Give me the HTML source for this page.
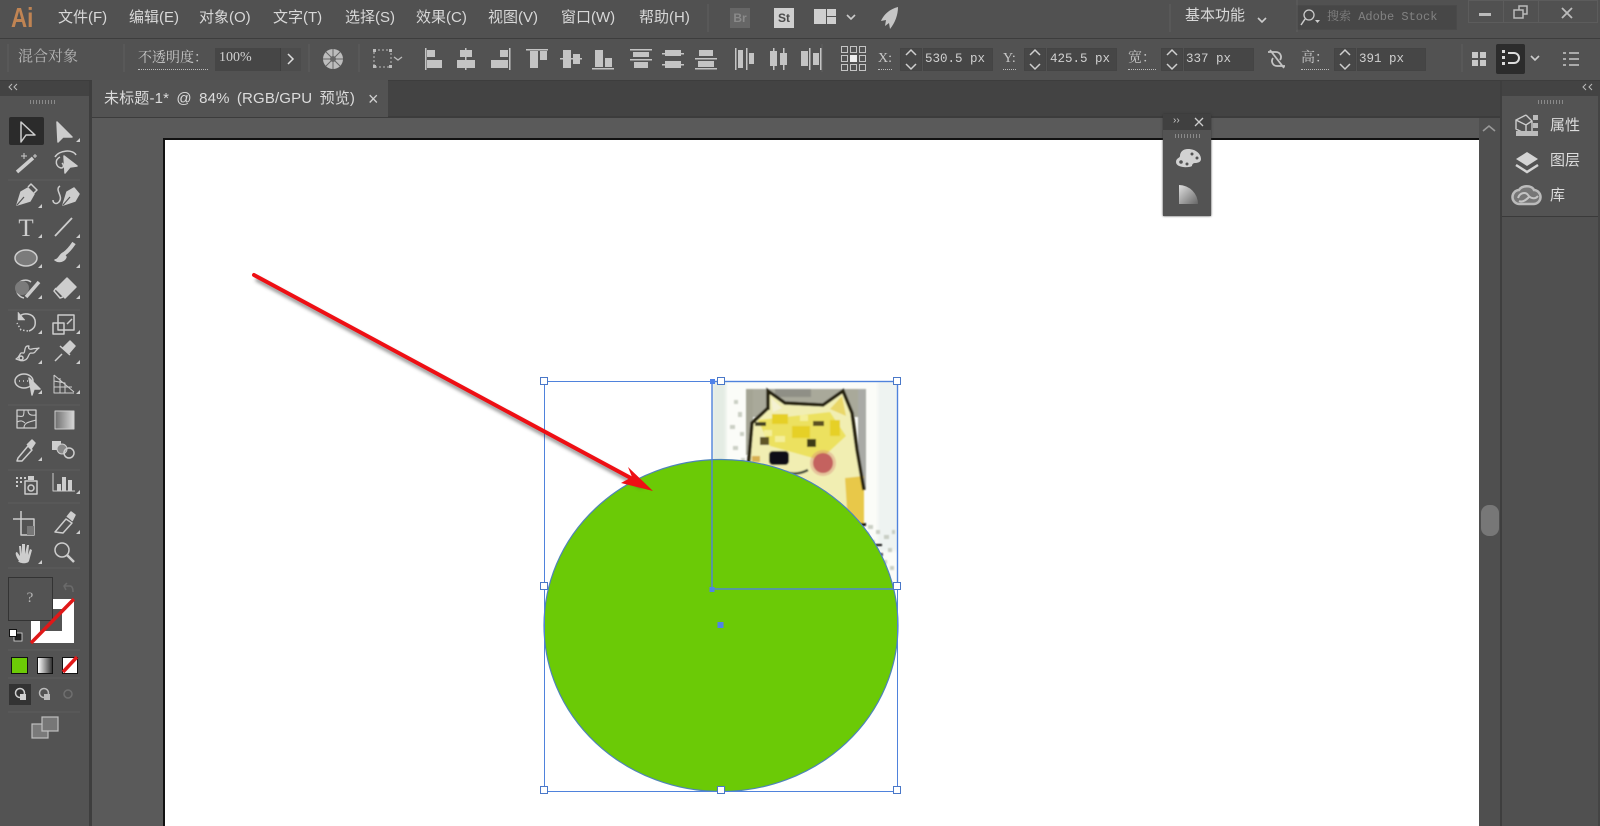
<!DOCTYPE html>
<html><head><meta charset="utf-8">
<style>
html,body{margin:0;padding:0;width:1600px;height:826px;overflow:hidden;background:#535353}
body{position:relative;font-family:"Liberation Sans","Noto Sans CJK SC",sans-serif;color:#d4d4d4}
#r{position:absolute;left:0;top:0;width:1600px;height:826px;filter:blur(.35px);overflow:hidden}
div,span{position:absolute;white-space:nowrap}
.m{top:9px;font-size:15px;line-height:18px;color:#d8d8d8}
.s{font-family:"Liberation Serif","Noto Serif CJK SC",serif;font-size:14px;color:#c8c8c8;line-height:18px}
.u{border-bottom:1px dotted #bbb;padding-bottom:1px}
.f{top:48px;height:23px;background:#474747;box-shadow:inset 0 0 0 1px #444;}
.v{top:48px;height:23px;font-family:"Liberation Mono",monospace;font-size:12.5px;line-height:22px;color:#d0d0d0}
.grip{height:4px;background:repeating-linear-gradient(90deg,#8a8a8a 0 1px,#535353 1px 3px)}
svg{position:absolute;left:0;top:0}
</style></head><body><div id="r">
<!-- base regions -->
<div style="left:0;top:0;width:1600px;height:38px;background:#515151;border-bottom:1px solid #3d3d3d"></div>
<div style="left:0;top:39px;width:1600px;height:41px;background:#525252;border-bottom:1px solid #3d3d3d"></div>
<div style="left:0;top:81px;width:1600px;height:37px;background:#434343"></div>
<div style="left:92px;top:118px;width:1387px;height:708px;background:#5a5a5a"></div>
<div style="left:92px;top:116px;width:1410px;height:2px;background:#3c3c3c"></div>
<div style="left:0;top:81px;width:89px;height:15px;background:#434343"></div>
<div style="left:0;top:96px;width:89px;height:730px;background:#535353"></div>
<div style="left:89px;top:81px;width:3px;height:745px;background:#3e3e3e"></div>
<div style="left:92px;top:80px;width:296px;height:37px;background:#535353"></div>
<!-- artboard -->
<div style="left:163px;top:138px;width:1316px;height:688px;background:#fff;border-left:2px solid #111;border-top:2px solid #111;box-sizing:border-box"></div>
<!-- scrollbar -->
<div style="left:1479px;top:118px;width:21px;height:708px;background:#4f4f4f"></div>
<div style="left:1481px;top:505px;width:18px;height:31px;background:#777;border-radius:8px"></div>
<!-- right dock -->
<div style="left:1500px;top:81px;width:2px;height:745px;background:#3e3e3e"></div>
<div style="left:1502px;top:81px;width:98px;height:15px;background:#434343"></div>
<div style="left:1502px;top:96px;width:96px;height:120px;background:#535353"></div>
<div style="left:1502px;top:216px;width:98px;height:1px;background:#3a3a3a"></div>
<div style="left:1502px;top:217px;width:96px;height:609px;background:#505050"></div>
<div style="left:1598px;top:96px;width:2px;height:730px;background:#444"></div>
<div class="grip" style="left:30px;top:100px;width:27px"></div>
<div class="grip" style="left:1538px;top:100px;width:25px"></div>

<!-- menu -->
<div style="left:11px;top:3px;font-size:28px;line-height:30px;color:#c08453;font-weight:bold;transform:scaleX(.8);transform-origin:0 0">Ai</div>
<div class="m" style="left:58px">文件(F)</div>
<div class="m" style="left:129px">编辑(E)</div>
<div class="m" style="left:199px">对象(O)</div>
<div class="m" style="left:273px">文字(T)</div>
<div class="m" style="left:345px">选择(S)</div>
<div class="m" style="left:416px">效果(C)</div>
<div class="m" style="left:488px">视图(V)</div>
<div class="m" style="left:561px">窗口(W)</div>
<div class="m" style="left:639px">帮助(H)</div>
<div style="left:730px;top:8px;width:20px;height:20px;background:#666;color:#8a8a8a;font:bold 12px/20px 'Liberation Sans',sans-serif;text-align:center">Br</div>
<div style="left:774px;top:8px;width:20px;height:20px;background:#cfcfcf;color:#4a4a4a;font:bold 12px/20px 'Liberation Sans',sans-serif;text-align:center">St</div>
<div class="m" style="left:1185px;top:7px;font-size:15px">基本功能</div>
<div style="left:1296px;top:5px;width:161px;height:25px;background:#474747;box-shadow:inset 0 0 0 1px #4a4a4a;border-radius:1px"></div>
<div class="s" style="left:1327px;top:8px;font-size:12px;color:#828282;font-family:'Liberation Mono','Noto Serif CJK SC',monospace">搜索 Adobe Stock</div>
<div style="left:1468px;top:0;width:130px;height:23px;box-shadow:inset 0 0 0 1px #5c5c5c"></div>
<div style="left:1503px;top:0;width:1px;height:23px;background:#5c5c5c"></div>
<div style="left:1538px;top:0;width:1px;height:23px;background:#5c5c5c"></div>

<!-- control bar -->
<div class="s" style="left:18px;top:48px;font-size:15px;color:#b8b8b8">混合对象</div>
<div class="s u" style="left:138px;top:50px;font-size:14px;">不透明度：</div>
<div style="left:215px;top:48px;width:86px;height:23px;background:#464646"></div>
<div style="left:280px;top:48px;width:21px;height:23px;background:#4c4c4c;border-left:1px solid #3e3e3e;box-sizing:border-box"></div>
<div class="v" style="left:219px;top:47px;font-family:'Liberation Serif',serif;font-size:14px">100%</div>

<div class="s u" style="left:878px;top:50px;font-size:14px">X:</div>
<div class="f" style="left:900px;width:22px"></div><div class="f" style="left:923px;width:70px;background:#464646"></div>
<div class="v" style="left:925px">530.5 px</div>
<div class="s u" style="left:1003px;top:50px;font-size:14px">Y:</div>
<div class="f" style="left:1024px;width:22px"></div><div class="f" style="left:1047px;width:70px;background:#464646"></div>
<div class="v" style="left:1050px">425.5 px</div>
<div class="s u" style="left:1128px;top:50px;font-size:14px">宽：</div>
<div class="f" style="left:1161px;width:22px"></div><div class="f" style="left:1184px;width:70px;background:#464646"></div>
<div class="v" style="left:1186px">337 px</div>
<div class="s u" style="left:1301px;top:50px;font-size:14px">高：</div>
<div class="f" style="left:1334px;width:22px"></div><div class="f" style="left:1357px;width:69px;background:#464646"></div>
<div class="v" style="left:1359px">391 px</div>
<div style="left:1496px;top:44px;width:29px;height:30px;background:#2c2c2c;border-radius:2px"></div>

<!-- tab -->
<div style="left:104px;top:90px;font-size:15px;line-height:18px;color:#dcdcdc;word-spacing:3px;letter-spacing:.15px">未标题-1* @ 84% (RGB/GPU 预览)</div>
<div style="left:368px;top:89px;font-size:18px;line-height:20px;color:#d0d0d0">×</div>

<!-- tool selected + colour widgets -->
<div style="left:9px;top:117px;width:35px;height:28px;background:#2b2b2b;border-radius:2px"></div>
<div style="left:31px;top:599px;width:43px;height:44px;background:#fff"></div>
<div style="left:40px;top:609px;width:22px;height:22px;background:#535353"></div>
<div style="left:8px;top:577px;width:43px;height:42px;background:#535353;border:1px solid #333"></div>
<div style="left:8px;top:589px;width:44px;text-align:center;font:15px/18px 'Liberation Serif',serif;color:#b4b4b4">?</div>
<div style="left:11px;top:657px;width:15px;height:15px;background:#6ccb06;border:1px solid #111"></div>
<div style="left:37px;top:657px;width:14px;height:15px;background:linear-gradient(90deg,#fff,#333);border:1px solid #111"></div>
<div style="left:62px;top:657px;width:14px;height:15px;background:#fff;border:1px solid #111"></div>
<div style="left:9px;top:684px;width:22px;height:21px;background:#333"></div>

<!-- floating panel -->
<div style="left:1163px;top:114px;width:48px;height:102px;background:#535353;box-shadow:0 0 2px #333"></div>
<div style="left:1163px;top:114px;width:48px;height:16px;background:#404040"></div>
<div style="left:1173px;top:113px;font-size:10px;line-height:16px;color:#ccc">››</div>
<div class="grip" style="left:1175px;top:134px;width:25px"></div>

<!-- right dock labels -->
<div style="left:1550px;top:117px;font-size:15px;line-height:18px;color:#dcdcdc">属性</div>
<div style="left:1550px;top:152px;font-size:15px;line-height:18px;color:#dcdcdc">图层</div>
<div style="left:1550px;top:187px;font-size:15px;line-height:18px;color:#dcdcdc">库</div>

<!-- everything drawn -->
<svg width="1600" height="826" viewBox="0 0 1600 826" fill="none">
<defs>
<filter id="b1" x="-10%" y="-10%" width="120%" height="120%"><feGaussianBlur stdDeviation="0.9"/></filter>
<filter id="b2" x="-10%" y="-10%" width="120%" height="120%"><feGaussianBlur stdDeviation="1.6"/></filter>
<filter id="sh" x="-5%" y="-5%" width="110%" height="115%"><feGaussianBlur stdDeviation="1.8"/></filter>
<linearGradient id="g1" x1="0" y1="0" x2="1" y2="1"><stop offset="0" stop-color="#e0e0e0"/><stop offset="1" stop-color="#666"/></linearGradient>
<linearGradient id="g2" x1="0" y1="0" x2="1" y2="0"><stop offset="0" stop-color="#6e6e6e"/><stop offset="1" stop-color="#d8d8d8"/></linearGradient>
<clipPath id="ci"><rect x="712" y="381" width="186" height="208"/></clipPath>
</defs>

<!-- dog image -->
<g clip-path="url(#ci)">
<rect x="712" y="381" width="186" height="208" fill="#fbfcf8"/>
<rect x="712" y="381" width="14" height="208" fill="#e4ece4" filter="url(#b2)"/>
<rect x="878" y="381" width="20" height="170" fill="#eef3f1" filter="url(#b2)"/>
<g filter="url(#b1)">
<rect x="746" y="389" width="119" height="28" fill="#a9a99a"/>
<rect x="746" y="389" width="7" height="66" fill="#a4a494"/>
<rect x="858" y="389" width="8" height="100" fill="#a9aaa6"/>
<path d="M775 389h36v8h-36z" fill="#8f8f86"/>
<path d="M768 391L785 403L823 405L843 391L852 413L857 450L864 490L864 526L746 526L748 460L752 423L768 408Z" fill="#f1eeb2"/>
<path d="M758 420L830 412L846 436L820 460L770 446Z" fill="#ece15e"/>
<path d="M772 414h16v10h-16zM792 426h18v12h-18zM830 420h10v16h-10z" fill="#e6d028"/>
<path d="M764 430h8v6h-8zM775 436h10v6h-10zM800 415h8v6h-8z" fill="#f4ef9a"/>
<path d="M845 478L864 476L864 525L848 525Z" fill="#e8c848"/>
<path d="M770 478h16v8h-16z" fill="#eee9b4"/>
<path d="M771 398L782 408L773 412Z" fill="#f4f1d2"/>
<path d="M830 409L842 396L846 416Z" fill="#e9d768"/>
<path d="M768 410V391L785 403L823 405L843 391L852 413L857 450L864 490" stroke="#25220f" stroke-width="3.500"/>
<path d="M768 408L752 423L748 470" stroke="#25220f" stroke-width="3.500"/>
<rect x="755" y="422" width="11" height="4" fill="#403c22"/>
<rect x="760" y="437" width="9" height="8" fill="#5e5428"/>
<rect x="813" y="421" width="11" height="5" fill="#5a5020"/>
<rect x="807" y="439" width="9" height="8" fill="#3e3a18"/>
<rect x="769" y="451" width="20" height="14" rx="4" fill="#0a1018"/>
<circle cx="823" cy="463" r="10" fill="#b8484c"/>
<circle cx="823" cy="463" r="13" fill="#d68a7a" opacity=".4"/>
<path d="M785 472Q796 476 808 470" stroke="#3a4438" stroke-width="2.500"/>
<rect x="752" y="456" width="8" height="6" fill="#d8b050"/>
<rect x="860" y="523" width="6" height="3" fill="#111"/>
<rect x="875" y="544" width="7" height="2" fill="#111"/>
<rect x="880" y="553" width="3" height="3" fill="#445"/>
</g>
<g fill="#bfc4b8" filter="url(#b1)" opacity=".8">
<path d="M734 400h4v4h-4zM738 412h4v5h-4zM730 425h5v4h-5zM740 432h4v4h-4zM733 446h5v4h-5zM741 458h4v4h-4zM736 470h4v4h-4z"/>
<path d="M868 525h5v4h-5zM876 530h4v4h-4zM884 535h5v4h-5zM870 540h5v3h-5zM888 548h4v4h-4zM882 560h5v4h-5zM890 566h4v4h-4zM885 574h5v4h-5zM892 530h3v4h-3zM866 532h3v3h-3z"/>
</g>
</g>

<!-- circle -->
<ellipse cx="721" cy="625.500" rx="177" ry="166" fill="#6bca06" stroke="#4e84b8" stroke-width="1.200"/>

<!-- selection -->
<g stroke="#4f82dc" stroke-width="1">
<rect x="544.500" y="381.500" width="353" height="410"/>
<rect x="712" y="381.500" width="185.500" height="207.500" stroke-width="1.400"/>
</g>
<g fill="#fff" stroke="#4a78c8" stroke-width="1">
<rect x="540.500" y="377.500" width="7" height="7"/><rect x="717.500" y="377.500" width="7" height="7"/><rect x="893.500" y="377.500" width="7" height="7"/>
<rect x="540.500" y="582.500" width="7" height="7"/><rect x="893.500" y="582.500" width="7" height="7"/>
<rect x="540.500" y="786.500" width="7" height="7"/><rect x="717.500" y="786.500" width="7" height="7"/><rect x="893.500" y="786.500" width="7" height="7"/>
</g>
<g fill="#4f82e8"><rect x="710" y="379" width="5" height="5"/><rect x="709.500" y="587" width="5" height="5"/><rect x="717.500" y="622" width="6" height="6"/></g>

<!-- arrow -->
<g filter="url(#sh)" opacity=".6" transform="translate(2 4)"><path d="M254 275L640 483" stroke="#444" stroke-width="4"/></g>
<path d="M254 275L640 483" stroke="#ee0f14" stroke-width="4" stroke-linecap="round"/>
<path d="M628 467L653 491L621 483L632 477Z" fill="#ee0f14"/>

<!-- floating panel icons -->
<path d="M1195 118l8 8M1203 118l-8 8" stroke="#ccc" stroke-width="1.300"/>
<path d="M1188 149c8 0 13 5 13 10 0 3-3 4-6 4-3 0-3 3-3 3-3 2-16 2-16-4 0-4 4-4 4-6 0-4 3-7 8-7z" fill="#d2d2d2"/>
<g fill="#535353"><circle cx="1192" cy="154" r="1.500"/><circle cx="1197" cy="158" r="1.500"/><circle cx="1181" cy="162" r="1.800"/><circle cx="1187" cy="164" r="1.500"/></g>
<path d="M1179 185A19 19 0 0 1 1198 204H1179Z" fill="url(#g1)"/>

<!-- right dock icons -->
<path d="M1586 84l-3 3 3 3M1592 84l-3 3 3 3" stroke="#bbb"/>
<path d="M12 84l-3 3 3 3M17 84l-3 3 3 3" stroke="#bbb"/>
<path d="M1483 131l6-5 6 5" stroke="#999" stroke-width="1.600"/>
<path d="M1527 116l-10 5v9l10 5 6-3v-10l-6-6M1517 121l10 5 6-4M1527 126v9" stroke="#ccc" stroke-width="1.400" transform="translate(-1 -1)"/>
<rect x="1533" y="115" width="5" height="5" fill="#bbb"/><rect x="1533" y="123" width="5" height="5" fill="#bbb"/>
<rect x="1516" y="131" width="22" height="5" fill="#bbb"/>
<path d="M1527 152l11 7-11 7-11-7Z" fill="#d4d4d4"/>
<path d="M1516 165l11 7 11-7" stroke="#d4d4d4" stroke-width="2.500"/>
<path d="M1520 204a7 7 0 0 1-1-14c3-5 13-5 15 0a7 7 0 0 1-1 14Z" stroke="#bbb" stroke-width="2.500" fill="#777"/>
<path d="M1518 198c2-6 8-6 10-3s7 5 10 1M1519 201c4 2 8-2 10-4" stroke="#c4c4c4" stroke-width="2"/>

<!-- top bar icons -->
<g fill="#cfcfcf"><rect x="814" y="9" width="12" height="15"/><rect x="827" y="9" width="9" height="7"/><rect x="827" y="17" width="9" height="7"/></g>
<path d="M847 15l4 4 4-4M1258 18l4 4 4-4M1531 56l4 4 4-4" stroke="#ccc" stroke-width="1.600"/>
<path d="M898 7c-8 2-14 7-17 14l5-1-1 6 4-3 1 6c5-6 8-14 8-22z" fill="#c6c6c6"/>
<circle cx="1309" cy="15" r="5" stroke="#ccc" stroke-width="1.300"/><path d="M1305 19l-4 6" stroke="#ccc" stroke-width="1.500"/><path d="M1315 20h5l-2.500 3z" fill="#ccc"/>
<rect x="1479" y="13" width="12" height="3" fill="#bbb"/>
<rect x="1519" y="6" width="8" height="8" stroke="#bbb" stroke-width="1.500"/><rect x="1514" y="10" width="9" height="8" fill="#515151" stroke="#bbb" stroke-width="1.500"/>
<path d="M1562 8l10 10M1572 8l-10 10" stroke="#bbb" stroke-width="1.800"/>
<path d="M708 4v28M1170 4v28M1297 0v32" stroke="#5e5e5e"/>

<!-- control-bar icons -->
<path d="M288 54l5 5-5 5" stroke="#ddd" stroke-width="1.500"/>
<circle cx="333" cy="59" r="10" fill="#bdbdbd"/><circle cx="333" cy="59" r="3" fill="#6a6a6a"/>
<path d="M333 49v20M323 59h20M326 52l14 14M340 52l-14 14" stroke="#666" stroke-width="1"/>
<path d="M124 44v28M309 44v28M359 44v28M822 44v28M1462 44v28M8 44v28" stroke="#5e5e5e"/>
<path d="M374 50h17v17h-17z" stroke="#bbb" stroke-dasharray="2 2"/>
<g fill="#bbb"><rect x="373" y="49" width="3" height="3"/><rect x="389" y="49" width="3" height="3"/><rect x="373" y="65" width="3" height="3"/><rect x="389" y="65" width="3" height="3"/></g>
<path d="M394 57l4 3 4-3" stroke="#bbb" stroke-width="1.300"/>
<g fill="#c4c4c4">
<rect x="425" y="48" width="1.500" height="22"/><rect x="427" y="50" width="8" height="7"/><rect x="427" y="60" width="15" height="8"/>
<rect x="465" y="48" width="1.500" height="22"/><rect x="460" y="50" width="12" height="7"/><rect x="457" y="60" width="18" height="8"/>
<rect x="509" y="48" width="1.500" height="22"/><rect x="500" y="50" width="8" height="7"/><rect x="491" y="60" width="17" height="8"/>
<rect x="526" y="49" width="22" height="1.500"/><rect x="530" y="51" width="8" height="17"/><rect x="540" y="51" width="7" height="9"/>
<rect x="560" y="58" width="22" height="1.500"/><rect x="563" y="50" width="8" height="18"/><rect x="573" y="54" width="7" height="10"/>
<rect x="592" y="68" width="22" height="1.500"/><rect x="595" y="50" width="8" height="17"/><rect x="605" y="58" width="7" height="9"/>
<rect x="630" y="49" width="22" height="1.500"/><rect x="633" y="52" width="16" height="5"/><rect x="630" y="59" width="22" height="1.500"/><rect x="634" y="62" width="14" height="6"/>
<rect x="662" y="53" width="22" height="1.500"/><rect x="665" y="50" width="16" height="6"/><rect x="662" y="64" width="22" height="1.500"/><rect x="665" y="61" width="16" height="7"/>
<rect x="695" y="58" width="22" height="1.500"/><rect x="699" y="50" width="14" height="6"/><rect x="695" y="68" width="22" height="1.500"/><rect x="698" y="61" width="16" height="6"/>
<rect x="735" y="48" width="1.500" height="22"/><rect x="738" y="50" width="5" height="18"/><rect x="746" y="48" width="1.500" height="22"/><rect x="749" y="53" width="5" height="11"/>
<rect x="773" y="48" width="1.500" height="22"/><rect x="770" y="51" width="7" height="15"/><rect x="783" y="48" width="1.500" height="22"/><rect x="780" y="53" width="7" height="12"/>
<rect x="809" y="48" width="1.500" height="22"/><rect x="801" y="51" width="7" height="15"/><rect x="820" y="48" width="1.500" height="22"/><rect x="813" y="53" width="6" height="12"/>
</g>
<!-- ref point -->
<g stroke="#c4c4c4" fill="none">
<rect x="841.500" y="46.500" width="6" height="6"/><rect x="850.500" y="46.500" width="6" height="6"/><rect x="859.500" y="46.500" width="6" height="6"/>
<rect x="841.500" y="55.500" width="6" height="6"/><rect x="859.500" y="55.500" width="6" height="6"/>
<rect x="841.500" y="64.500" width="6" height="6"/><rect x="850.500" y="64.500" width="6" height="6"/><rect x="859.500" y="64.500" width="6" height="6"/>
</g><rect x="850" y="55" width="7" height="7" fill="#eee"/>
<!-- spinners -->
<g stroke="#cfcfcf" stroke-width="1.500">
<path d="M906 55l5-5 5 5M906 64l5 5 5-5"/><path d="M1030 55l5-5 5 5M1030 64l5 5 5-5"/><path d="M1167 55l5-5 5 5M1167 64l5 5 5-5"/><path d="M1340 55l5-5 5 5M1340 64l5 5 5-5"/>
</g>
<path d="M1268 52h8a5 5 0 0 1 4 8M1285 66h-8a5 5 0 0 1-4-8M1270 50l14 18" stroke="#c4c4c4" stroke-width="1.800"/>
<g fill="#c8c8c8"><rect x="1472" y="52" width="6" height="6"/><rect x="1480" y="52" width="6" height="6"/><rect x="1472" y="60" width="6" height="6"/><rect x="1480" y="60" width="6" height="6"/></g>
<g fill="#ddd"><rect x="1502" y="50" width="3" height="3"/><rect x="1502" y="56" width="3" height="3"/><rect x="1502" y="62" width="3" height="3"/></g>
<path d="M1508 53h6a5 5 0 0 1 0 10h-6" stroke="#ddd" stroke-width="2"/>
<path d="M1569 53h10M1569 59h10M1569 65h10M1563 53h3M1563 59h3M1563 65h3" stroke="#c8c8c8" stroke-width="1.500"/>

<!-- toolbar separators -->
<path d="M8 180h72M8 310h72M8 405h72M8 470h72M8 503h72M8 568h72M8 650h72M8 678h72M8 712h72" stroke="#5d5d5d"/>

<!-- tools -->
<g stroke="#cdcdcd" stroke-width="1.500" stroke-linejoin="round">
<path d="M21 122L35 135H26L21 142Z"/>
<path d="M57 122L72 137H63L58 142Z" fill="#cdcdcd"/>
<path d="M17 172L33 158" stroke-width="3.500"/>
<path d="M24 153v6M21 156h6M35 154v4M33 156h4" stroke-width="1"/>
<path d="M55 157c4-7 18-8 21-2M60 157c-6 3-4 10 1 11 3 0 3-3 1-5" />
<path d="M64 156L77 166L70 167L65 173Z" fill="#cdcdcd"/>
<!-- pen -->
<path d="M17 205L21 192L28 188L34 194L30 201Z" fill="#cdcdcd"/><path d="M17 205L24 197" stroke="#535353" stroke-width="1.200"/>
<path d="M28 187l3-3 6 6-3 3" />
<!-- curvature pen -->
<path d="M63 205L67 192L74 188L79 194L75 201Z" fill="#cdcdcd"/><path d="M63 205L70 197" stroke="#535353" stroke-width="1.200"/>
<path d="M60 186c-6 4 4 10-1 16-3 3-6 1-6-2" />
<path d="M55 236L72 218" stroke-width="1.800"/>
<ellipse cx="26" cy="258" rx="11" ry="8" fill="#7b7b7b"/>
<path d="M74 243c-4 6-7 9-10 11" stroke-width="4"/><path d="M63 253c-4 2-4 7-8 7 4 3 10 1 11-3Z" fill="#cdcdcd"/>
<!-- shaper -->
<path d="M31 282a9 9 0 1 0-7 16" /><circle cx="22" cy="288" r="7" fill="#7b7b7b" stroke="none"/><path d="M26 297L39 282" stroke-width="3.500"/>
<!-- eraser -->
<path d="M67 278L76 287L65 298L56 289Z" fill="#cdcdcd"/><path d="M56 288l-2 3 6 7 3-1" fill="none"/>
<!-- rotate -->
<path d="M19 317c4-5 14-4 16 3 1 6-1 9-6 11" /><path d="M28 331l-7-1-4-7" stroke-dasharray="1.500 2"/><path d="M18 312v8h7Z" fill="#cdcdcd" stroke-width=".5"/>
<!-- scale -->
<rect x="58" y="315" width="16" height="15"/><rect x="53" y="323" width="11" height="11"/><path d="M67 324l5-5" />
<!-- width -->
<path d="M16 359c5-3 3-7 7-6 3 1 0-8 6-7-1 2 0 4 3 3 3-1 4 0 7-1-4 2-3 6-8 5-3 0-2 6-6 7-2 1-4 1-6 0z" stroke-width="1.300"/><circle cx="21" cy="358" r="2"/>
<!-- pin -->
<path d="M55 361L62 354" /><path d="M60 346L70 355M63 348L70 341L75 346L69 353Z" fill="#cdcdcd"/>
<!-- shape builder -->
<ellipse cx="24" cy="381" rx="9" ry="7" /><path d="M29 378L40 389L34 389L32 395Z" fill="#cdcdcd"/><path d="M19 381h1M23 381h1M27 381h1"/>
<!-- perspective -->
<path d="M54 375L74 392M54 375V393H74M54 381L65 383V393M60 378V393M54 387H72" stroke-width="1"/>
<!-- mesh -->
<rect x="17" y="410" width="19" height="18" stroke-width="1.300"/><path d="M17 416c5 0 7 3 7-6M24 428c0-6 6-6 12-8M17 422c4-2 6-1 8 1M28 410c0 4 2 6 8 5" stroke-width="1.100"/>
<!-- gradient -->
<rect x="55" y="411" width="19" height="18" fill="url(#g2)" stroke-width="1"/>
<!-- eyedropper -->
<path d="M18 458L28 446L32 450L22 461L17 461Z"/><path d="M27 445l5-5 3 3-4 6" fill="#cdcdcd"/>
<!-- blend -->
<rect x="52" y="441" width="9" height="9" fill="#cdcdcd" stroke="none"/><circle cx="62" cy="449" r="5" fill="#888" stroke-width="1"/><circle cx="69" cy="453" r="5" stroke-width="1.500"/>
<!-- graph -->
<path d="M53 473v18h22" stroke-width="1"/>
</g>
<g fill="#cdcdcd">
<rect x="57" y="484" width="4" height="7"/><rect x="62" y="477" width="4" height="14"/><rect x="68" y="480" width="4" height="11"/>
<rect x="16" y="477" width="2" height="2"/><rect x="20" y="477" width="2" height="2"/><rect x="24" y="477" width="2" height="2"/><rect x="16" y="481" width="2" height="2"/><rect x="20" y="481" width="2" height="2"/><rect x="16" y="485" width="2" height="2"/>
<rect x="28" y="476" width="6" height="4"/>
</g>
<g stroke="#cdcdcd" stroke-width="1.500" stroke-linejoin="round">
<rect x="25" y="481" width="12" height="13"/><circle cx="31" cy="488" r="3"/>
<!-- artboard -->
<path d="M13 519H34V535H21V511"/>
<path d="M27 526h7v9h-7z" fill="#777" stroke="none"/>
<!-- slice -->
<path d="M55 532L66 519L72 523L63 533Z"/><path d="M67 517l4-5 4 3-3 6" fill="#cdcdcd"/>
<!-- zoom -->
<circle cx="62" cy="550" r="7"/><path d="M67 555l7 7" stroke-width="2.500"/>
</g>
<path d="M19 561c-4-6-4-9-2-9l3 4-1-10 2 0 1 8 0-10 3 0 0 10 2-9 2 0-1 10 2-6 2 1-3 11c-1 3-9 3-11 0z" fill="#cdcdcd"/>
<g fill="#cdcdcd">
<text x="26" y="236" font-family="Liberation Serif,serif" font-size="25" text-anchor="middle">T</text>
<path d="M80 138v4h-4zM42 204v4h-4zM42 234v4h-4zM80 234v4h-4zM42 264v4h-4zM80 264v4h-4zM42 295v4h-4zM80 295v4h-4zM42 330v4h-4zM80 330v4h-4zM42 360v4h-4zM80 360v4h-4zM42 390v4h-4zM80 390v4h-4zM42 457v4h-4zM80 490v4h-4zM80 530v4h-4zM42 560v4h-4z"/>
</g>
<!-- swap, default -->
<path d="M66 590l-2-4 3-3m-3 3h6c3 0 3 4 3 6" stroke="#6a6a6a" stroke-width="1.500"/>
<rect x="14" y="633" width="8" height="8" fill="#222" stroke="#ddd" stroke-width=".8"/>
<rect x="9.500" y="629.500" width="7" height="7" fill="#fff" stroke="#111"/>
<path d="M31 643L74 599" stroke="#e01818" stroke-width="3.500"/>
<path d="M63 672L77 657" stroke="#e01818" stroke-width="3.500"/>
<!-- draw modes -->
<circle cx="20" cy="693" r="4.500" stroke="#d0d0d0" stroke-width="1.500"/><rect x="20" y="694" width="6" height="6" fill="#d0d0d0"/>
<circle cx="44" cy="693" r="4.500" stroke="#bbb" stroke-width="1.500"/><rect x="44" y="694" width="6" height="6" fill="#bbb"/>
<circle cx="68" cy="694" r="4" stroke="#6f6f6f" stroke-width="1.500"/>
<!-- screen mode -->
<rect x="32" y="724" width="16" height="14" stroke="#c0c0c0" stroke-width="1.200" fill="#7a7a7a"/>
<rect x="42" y="717" width="16" height="14" stroke="#c0c0c0" stroke-width="1.200" fill="#777"/>
</svg>
</div></body></html>
